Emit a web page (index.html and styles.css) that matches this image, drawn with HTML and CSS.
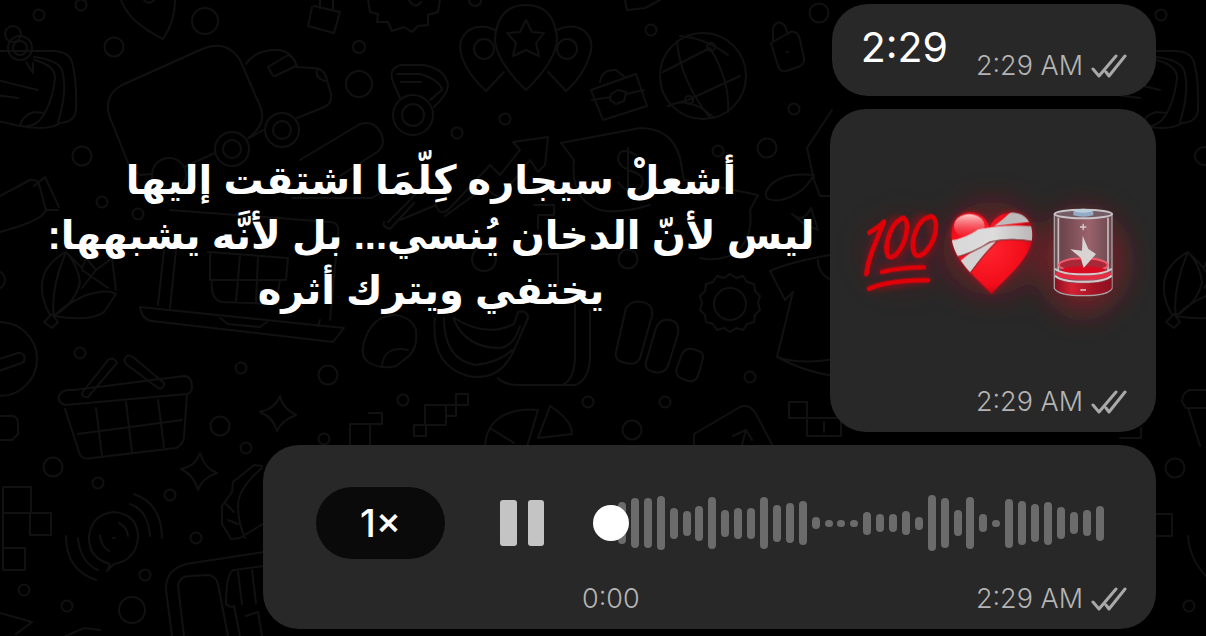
FILE: index.html
```html
<!DOCTYPE html>
<html lang="ar">
<head>
<meta charset="utf-8">
<meta name="viewport" content="width=device-width, initial-scale=1">
<title>Chat</title>
<link rel="stylesheet" href="styles.css">
</head>
<body>
<svg class="wallpaper" viewBox="0 0 1206 636" preserveAspectRatio="xMinYMin slice" aria-hidden="true">
  <defs>
    <g id="note">
      <path d="M-20 51H50Q68 50 72 62Q77 80 76 110Q75 122 60 123Q50 131 20 126L-20 117M34 57Q58 60 62 70Q68 90 58 122M34 60Q55 65 55 78Q52 105 40 120Q32 128 20 126Q22 115 34 112L45 113M-20 76L38 90M-20 93L18 98"/>
    </g>
    <g id="shell">
      <path d="M50 315Q36 290 46 270Q54 258 66 252Q78 265 80 282Q76 302 54 316Q50 290 66 252M54 316Q90 322 104 312L116 294Q106 288 84 296Q66 304 54 316M70 256L82 268L86 258L96 270L112 258M82 270L108 288M96 270L82 288M112 258L116 290M44 322L52 314L58 322L52 328Z"/>
    </g>
  </defs>
  <g class="small-dots">
    <circle cx="39" cy="15" r="5.500"/><circle cx="81" cy="5" r="5.500"/><circle cx="114" cy="47" r="9.500"/><circle cx="205" cy="21" r="13"/><circle cx="359" cy="47" r="6"/><circle cx="359" cy="84" r="13"/><circle cx="82" cy="156" r="9.500"/><circle cx="102" cy="202" r="5.500"/><circle cx="138" cy="214" r="5.500"/><circle cx="-4" cy="280" r="9"/>
    <circle cx="475" cy="0" r="6"/><circle cx="505" cy="119" r="5.500"/><circle cx="457" cy="133" r="5.500"/><circle cx="651" cy="30" r="5.500"/><circle cx="819" cy="13" r="9.500"/><circle cx="794" cy="109" r="5.500"/><circle cx="718" cy="151" r="5.500"/><circle cx="767" cy="148" r="9.500"/><circle cx="484" cy="259" r="12"/><circle cx="628" cy="259" r="9.500"/>
    <circle cx="80" cy="353" r="5.500"/><circle cx="241" cy="368" r="5.500"/><circle cx="328" cy="375" r="9.500"/><circle cx="220" cy="426" r="9.500"/><circle cx="246" cy="448" r="5.500"/><circle cx="324" cy="439" r="5.500"/><circle cx="403" cy="400" r="5.500"/><circle cx="53" cy="467" r="9.500"/><circle cx="98" cy="483" r="5.500"/><circle cx="170" cy="495" r="5.500"/><circle cx="196" cy="538" r="5.500"/><circle cx="145" cy="575" r="5.500"/><circle cx="132" cy="610" r="13"/><circle cx="67" cy="606" r="5.500"/><circle cx="24" cy="590" r="5.500"/>
    <circle cx="588" cy="402" r="5.500"/><circle cx="665" cy="402" r="5.500"/><circle cx="632" cy="430" r="9.500"/><circle cx="750" cy="377" r="5.500"/><circle cx="1161" cy="15" r="5.500"/><circle cx="1204" cy="156" r="9"/><circle cx="1175" cy="468" r="9.500"/><circle cx="1189" cy="606" r="5.500"/>
  </g>
  <use href="#note"/>
  <use href="#note" x="1122"/>
  <use href="#shell"/>
  <use href="#shell" x="1122"/>
  <circle cx="13" cy="34" r="8"/><circle cx="20" cy="48" r="12"/><circle cx="20" cy="48" r="7"/><path d="M26 62l7 11v-10"/>
  <path d="M120 -4Q125 20 163 39Q176 20 175 -4M144 0a6 6 0 0 0 10 0"/>
  <path d="M122 85L200 50Q226 38 240 60L260 106Q267 122 252 135L248 138M122 85Q104 95 109 115L130 168L140 175L152 174M184 167L215 153M246 64Q255 50 276 50Q292 50 297 67L312 68Q324 67 327 80L331 94Q333 104 322 108L297 118M273 76L268 67L288 55Q296 58 296 66L275 76M317 70Q315 78 325 81M263 130L249 138"/>
  <circle cx="282" cy="130" r="17"/><circle cx="282" cy="130" r="9"/><circle cx="232" cy="149" r="17"/><circle cx="232" cy="149" r="9"/><circle cx="169" cy="175" r="17"/>
  <path d="M312 7L308 26L334 33L340 12L314 6M320 8V0M333 10V0"/>
  <path d="M368 0L370 12L378 14L377 22L388 22L392 31L404 27L412 32L418 26L428 25L428 15L438 12L440 0M409 0q6 10 12 2"/>
  <path d="M393 82Q388 68 401 65H424Q447 70 448 86Q447 95 434 107M393 82L400 98M397 74H420Q440 80 442 90L430 100M401 82h20"/><circle cx="413" cy="115" r="20"/><circle cx="413" cy="115" r="11"/>
  <path d="M300 160L360 124Q374 120 381 133Q387 147 374 154L340 176M292 198H372L382 192M388 222L420 190M384 222q-2 5 6 7l24 -26"/>
  <path d="M526 90Q495 60 495 38Q498 5 526 5Q554 5 557 38Q557 60 526 90ZM526 20L532 32L544 33L536 43L539 56L526 50L513 56L516 43L507 33L520 32ZM495 30Q482 23 469 30Q456 40 462 57Q468 75 486 91L504 72M557 30Q572 23 583 30Q596 40 589 57Q584 75 566 91L548 72"/><circle cx="484" cy="49" r="10"/><circle cx="567" cy="49" r="10"/>
  <path d="M591 90L636 74L647 106L603 120ZM600 82Q602 69 616 70L626 78M592 100L611 97M626 94L644 90M611 94L618 90L626 92L624 101L616 104L610 100ZM625 0L627 10L645 8L660 0"/>
  <circle cx="703" cy="76" r="43"/><path d="M677 41Q680 80 710 118M663 72L710 48Q730 80 728 112M680 36Q705 38 728 55M670 105L688 100L740 76M668 106Q690 95 714 118"/><circle cx="711" cy="47" r="4"/><circle cx="689" cy="100" r="4"/>
  <path d="M771 43L790 32Q798 30 800 40L804 58Q805 65 798 67L786 71Q780 72 778 66ZM773 40V28Q778 18 785 26L788 34M787 52h1"/>
  <path d="M561 143L640 128Q672 128 680 158L684 180L758 195L750 210Q754 238 734 254Q716 262 700 258M561 143L574 160Q570 200 600 210Q620 214 650 205M636 155Q618 145 618 160Q620 168 634 172Q648 178 640 188Q628 196 618 182M628 148V196"/>
  <path d="M400 220L436 205Q440 218 450 208L490 165L500 175L520 150L513 142L548 137L545 165L538 172L530 160L500 198L484 188L445 216M534 205h20v10h-16v14"/>
  <path d="M832 110L807 148L814 180L820 196H834M814 175Q775 172 766 192Q764 202 780 200Q802 196 814 175M792 214Q803 224 811 208L818 230L804 224Z"/>
  <path d="M830 255Q790 262 770 271L785 300L793 292L777 357Q800 365 834 359M777 357Q805 372 834 376M818 260q0 15 14 20"/>
  <path d="M-4 198L30 180Q38 178 40 188L46 210Q44 220 0 232M34 186L45 177L59 207M46 210h12"/>
  <path d="M170 210L330 222Q340 222 338 235L330 320M164 250L158 305M176 250L170 308M208 252L288 258L286 280H210V254M212 280Q210 300 222 302L276 304L280 280M240 255L236 302M258 258L256 302M140 307L344 328L333 342L152 321Q142 320 140 307M220 318L228 324L260 327L268 321M320 320L318 326"/>
  <path d="M364 342Q360 356 368 362Q382 370 396 366L410 355Q418 346 416 330Q412 318 396 315Q372 315 364 342M382 366Q384 345 408 350"/>
  <path d="M435 318Q430 365 468 376Q500 382 514 350L528 318Q528 310 518 312L514 324Q486 338 454 318M444 318Q444 360 476 365Q500 362 512 350M454 320Q466 348 500 348Q514 346 520 326M498 378Q504 385 520 385H575Q590 380 590 355V310M562 385Q575 380 575 355V305M524 254h34v30"/>
  <path d="M626 308Q632 300 642 302Q654 304 652 316L640 358Q636 366 626 363Q614 361 616 352ZM656 328Q660 318 670 320Q680 322 678 334L668 366Q664 374 654 372Q644 370 646 362ZM682 354Q686 346 696 350Q704 352 703 358L698 376Q694 384 686 380Q676 378 676 370Z"/>
  <circle cx="730" cy="304" r="16"/>
  <path d="M730 274l6 4 7-2 4 6 7 2 1 7 5 5-2 7 2 7-5 5-1 7-7 2-4 6-7-2-6 4-6-4-7 2-4-6-7-2-1-7-5-5 2-7-2-7 5-5 1-7 7-2 4-6 7 2Z"/>
  <circle cx="0" cy="359" r="37"/><path d="M-4 360L18 353Q26 352 24 362L-4 372M-4 416H12Q18 416 18 424V434L12 440H-4"/>
  <path d="M65 405Q56 402 60 394Q64 389 74 390L184 376Q192 376 192 388Q192 392 187 394ZM65 409L80 455Q84 460 92 458L176 448Q184 444 184 436L187 394M78 434L182 420M96 408L102 456M126 402L132 452M158 400L164 447M82 393L108 360Q114 356 117 363L88 397Q82 398 82 393M124 360Q127 353 133 357L164 383Q164 390 158 388L126 364Z"/>
  <path d="M280 396Q282 408 296 415Q282 420 277 431Q274 418 260 412Q276 408 280 396ZM200 453Q204 468 217 473Q202 478 198 490Q194 475 181 469Q196 466 200 453Z"/>
  <path d="M3 487H31V513H51V535H30V513H3ZM3 513V570H25V548H3M350 424H370V446M350 446V424M369 413H382V424H370M414 425H426V436H414ZM425 405H446V425H425ZM456 394H468V405H446V416H456ZM789 402H807V418H789ZM807 418V436H841V418ZM824 422v10"/>
  <path d="M110 564Q88 558 89 536Q92 514 114 512Q138 514 138 538Q136 560 114 564L107 571ZM100 535q0 10 9 16M119 523q8 4 9 13M66 536Q66 570 96 580M78 538Q80 562 98 570M130 504Q148 510 150 536M134 494Q162 504 162 538M113 538h2"/>
  <path d="M262 466L254 465L233 482L232 492L222 506V524L231 539L240 538L266 522M262 468Q238 488 238 506Q238 522 245 538M226 504l8 8M228 520l10 4"/>
  <path d="M172 636L166 590Q165 570 186 564L264 552M184 636L178 585Q180 576 190 576L208 575Q216 576 218 584L228 636M264 566L234 570Q226 572 226 604Q230 608 234 606L240 636M238 572L242 604M252 570L256 603M246 616L258 612L262 636M0 613L32 622L16 634M66 636L84 628L100 630"/>
  <path d="M485 446Q486 426 502 416Q518 408 538 410L526 450M490 428L514 443M550 406Q572 420 572 434L538 438ZM694 446V434L740 407Q750 403 756 414L774 448M733 436L746 430L752 440M746 430L741 448M1136 514H1172V536H1136M1141 428V438H1120M1206 390H1190Q1182 392 1182 402L1186 408H1206M1188 408L1200 446M1188 536Q1190 560 1206 576"/>
</svg>

<main class="chat">
  <article class="bubble bubble-text">
    <p class="message" dir="ltr">2:29</p>
    <div class="meta" dir="ltr">
      <time>2:29 AM</time>
      <svg class="ticks" viewBox="0 0 36 24" role="img" aria-label="Delivered"><path d="M2 15L8 22L25 2M15 18L18 22L34 2"/></svg>
    </div>
  </article>

  <div class="sticker-row">
    <p class="caption" dir="rtl">أشعلْ سيجاره كِلّمَا اشتقت إليها<br>ليس لأنّ الدخان يُنسي... بل لأنَّه يشبهها:<br>يختفي ويترك أثره</p>
    <article class="bubble bubble-sticker">
      <svg class="sticker" viewBox="-30 0 978 390" role="img" aria-label="Hundred points, mending heart, low battery">
        <defs>
          <filter id="soft" filterUnits="userSpaceOnUse" x="-30" y="-200" width="978" height="800"><feGaussianBlur stdDeviation="42"/></filter>
          <filter id="halo" x="-30%" y="-30%" width="160%" height="160%"><feGaussianBlur stdDeviation="10"/></filter>
          <radialGradient id="heartFill" cx="45%" cy="45%" r="60%"><stop offset="0" stop-color="#ff2530"/><stop offset=".7" stop-color="#f20d1a"/><stop offset="1" stop-color="#b8000c"/></radialGradient>
          <linearGradient id="shine" x1="0" y1="0" x2="0" y2="1"><stop offset="0" stop-color="#ffd0d0"/><stop offset="1" stop-color="#f03040" stop-opacity=".3"/></linearGradient>
          <linearGradient id="bandage" x1="0" y1="0" x2="1" y2="0"><stop offset="0" stop-color="#d8d8d8"/><stop offset=".5" stop-color="#dedcdc"/><stop offset="1" stop-color="#b5b3b3"/></linearGradient>
          <linearGradient id="glass" x1="0" y1="0" x2="1" y2="0"><stop offset="0" stop-color="#6c5057"/><stop offset=".15" stop-color="#70464e"/><stop offset=".6" stop-color="#9b626c"/><stop offset="1" stop-color="#67494f"/></linearGradient>
          <linearGradient id="base" x1="0" y1="0" x2="1" y2="0"><stop offset="0" stop-color="#8b1020"/><stop offset=".3" stop-color="#d52233"/><stop offset=".65" stop-color="#a61525"/><stop offset="1" stop-color="#8b1020"/></linearGradient>
          <clipPath id="heartClip"><path d="M455 312C420 270 337 215 334 135C334 90 358 67 390 67C420 67 441 87 449 112C462 82 488 67 520 68C557 70 578 98 577 137C574 210 490 268 455 312Z"/></clipPath>
        </defs>
        <g class="glow" filter="url(#soft)"><ellipse cx="455" cy="175" rx="145" ry="140" opacity=".45"/><ellipse cx="730" cy="215" rx="125" ry="155" opacity=".6"/><ellipse cx="185" cy="190" rx="120" ry="110" opacity=".16"/></g>
        <g class="hundred-glow" filter="url(#halo)"><path d="M78 250L112 120M120 240L255 228M88 295L265 268"/><ellipse cx="168" cy="145" rx="25" ry="58"/><ellipse cx="248" cy="138" rx="30" ry="58"/></g>
        <g class="hundred">
          <path d="M88 128Q115 112 132 95Q112 145 96 184Q83 220 79 252"/>
          <path d="M192 84C152 92 130 172 144 198C160 216 199 164 201 112C202 91 193 78 182 87"/>
          <path d="M272 79C231 86 210 154 222 188C237 220 286 164 288 111C289 86 277 72 264 83"/>
          <path d="M126 246Q180 232 251 232M87 296Q155 269 264 271"/>
        </g>
        <path class="heart-glow" filter="url(#halo)" d="M455 312C420 270 337 215 334 135C334 90 358 67 390 67C420 67 441 87 449 112C462 82 488 67 520 68C557 70 578 98 577 137C574 210 490 268 455 312Z"/>
        <g clip-path="url(#heartClip)">
          <path fill="url(#heartFill)" d="M325 55H590V320H325Z"/>
          <ellipse cx="388" cy="108" rx="46" ry="36" fill="url(#shine)"/>
          <path fill="#bcbaba" d="M462 108C492 88 508 66 525 60L562 78L585 94Q520 100 462 108Z"/>
          <path fill="#b80c18" d="M545 103L585 96V116Z"/>
          <path fill="#d3d1d1" d="M362 212Q388 190 412 176L474 148Q430 190 389 250Z"/>
          <path fill="url(#bandage)" d="M328 152Q375 146 415 118Q500 100 590 110V155Q520 140 450 155Q400 188 340 203Z"/>
          <path fill="none" stroke="#6b3034" stroke-width="3" d="M342 204Q400 189 450 156Q510 141 580 156M474 152Q430 194 389 250"/>
        </g>
        <path fill="url(#glass)" stroke="#aaa1a4" stroke-width="4" d="M643 72V295Q655 317 730 317Q805 317 816 295V72Z"/>
        <path fill="none" stroke="#c9babd" stroke-width="5" d="M655 83V240M804 83V240"/>
        <ellipse cx="730" cy="225" rx="73" ry="20" fill="#a82838" stroke="#f05a6d" stroke-width="6"/>
        <ellipse cx="730" cy="241" rx="66" ry="12" fill="#d90b22"/>
        <path fill="url(#base)" d="M645 260Q660 280 730 280Q800 280 815 260V295Q800 315 730 315Q660 315 645 295Z"/>
        <path fill="none" stroke="#e92b42" stroke-width="12" d="M649 248Q665 263 730 263Q795 263 811 248"/>
        <path fill="none" stroke="#d6c6ca" stroke-width="6" d="M645 236Q665 253 730 253Q795 253 815 236M645 257Q665 275 730 275Q795 275 815 257"/>
        <ellipse cx="730" cy="72" rx="86" ry="13" fill="#745c65" stroke="#c8c3c7" stroke-width="6"/>
        <path fill="#92aac3" d="M700 64Q730 52 760 64V76Q730 84 700 76Z"/><ellipse cx="730" cy="62" rx="28" ry="6" fill="#becbd8"/>
        <path fill="none" stroke="#d8cdd0" stroke-width="4" d="M720 111H739M729.500 101V121M721 300H738"/>
        <path fill="#dad3d3" d="M728 137L745 177L768 192L731 234L722 203L691 178L726 182Z"/>
      </svg>
      <div class="meta" dir="ltr">
        <time>2:29 AM</time>
        <svg class="ticks" viewBox="0 0 36 24" role="img" aria-label="Delivered"><path d="M2 15L8 22L25 2M15 18L18 22L34 2"/></svg>
      </div>
    </article>
  </div>

  <article class="bubble bubble-voice" dir="ltr">
    <div class="player">
      <button class="speed" type="button" aria-label="Playback speed 1x">1×</button>
      <button class="pause" type="button" aria-label="Pause"><svg viewBox="0 0 44 46"><rect x="0" y="0" width="17" height="46" rx="3"/><rect x="28" y="0" width="16" height="46" rx="3"/></svg></button>
      <div class="track">
        <div class="wave" id="wave" aria-hidden="true"></div>
        <input class="seek" type="range" min="0" max="100" value="0" aria-label="Seek">
      </div>
    </div>
    <div class="voice-footer">
      <time>0:00</time>
      <div class="meta">
        <time>2:29 AM</time>
        <svg class="ticks" viewBox="0 0 36 24" role="img" aria-label="Delivered"><path d="M2 15L8 22L25 2M15 18L18 22L34 2"/></svg>
      </div>
    </div>
  </article>
</main>
<script src="wave.js"></script>
</body>
</html>
```
FILE: wave.js
```js
const levels = [42, 50, 50, 54, 31, 25, 35, 52, 27, 31, 31, 52, 37, 40, 44, 12, 7, 7, 7,
  23, 18, 18, 24, 13, 56, 50, 26, 52, 18, 7, 49, 44, 38, 43, 32, 22, 26, 35];
const wave = document.getElementById('wave');
for (const level of levels) {
  const bar = document.createElement('span');
  bar.className = 'bar';
  bar.style.height = level + 'px';
  wave.append(bar);
}
```
FILE: styles.css
```css
* { box-sizing: border-box; }

body {
  margin: 0;
  min-height: 100vh;
  position: relative;
  overflow-x: hidden;
  background: #000;
  color: #fff;
  font-family: Inter, "DejaVu Sans", sans-serif;
}

p { margin: 0; }

.wallpaper {
  position: absolute;
  inset: 0;
  width: 100%;
  height: 100%;
  fill: none;
  stroke: #111;
  stroke-width: 2;
  stroke-linejoin: round;
  stroke-linecap: round;
}

.chat {
  position: relative;
  display: flex;
  flex-direction: column;
  gap: 13px;
  padding: 4px 50px 6px 32px;
}

.bubble { background: #282828; border-radius: 36px; }

.meta {
  display: flex;
  align-items: center;
  justify-content: flex-end;
  gap: 8px;
}

.meta, .voice-footer {
  color: #b4b4b4;
  font-size: 27px;
  font-weight: 300;
  line-height: 28px;
}

.ticks {
  width: 36px;
  height: 24px;
  fill: none;
  stroke: #a9a9a9;
  stroke-width: 3;
  stroke-linecap: round;
  stroke-linejoin: round;
}

.bubble-text {
  align-self: flex-end;
  display: flex;
  align-items: flex-end;
  gap: 28px;
  padding: 14px 29px 16px;
}

.message {
  font-size: 41px;
  line-height: 58px;
  padding-bottom: 4px;
}

.sticker-row { display: flex; align-items: stretch; }

.caption {
  flex: 1;
  padding-top: 44px;
  text-align: center;
  white-space: nowrap;
  font: 700 40px/55px "Liberation Sans", "DejaVu Sans", sans-serif;
}

.bubble-sticker {
  width: 326px;
  min-height: 323px;
  display: flex;
  flex-direction: column;
  justify-content: space-between;
  padding: 81px 0 16px;
}

.bubble-sticker .meta { padding-right: 29px; }

.sticker { width: 100%; height: 130px; overflow: visible; }
.glow { fill: #a01a28; }
.hundred, .hundred-glow { fill: none; stroke: #df0008; stroke-width: 14; stroke-linecap: round; stroke-linejoin: round; }
.hundred-glow { stroke-width: 18; opacity: .4; }
.heart-glow { fill: #e01020; opacity: .7; }

.bubble-voice { margin-left: 231px; padding: 42px 0 16px; }

.player {
  display: flex;
  align-items: center;
  padding: 0 52px 0 53px;
}

button { border: 0; padding: 0; cursor: pointer; }

.speed {
  width: 129px;
  height: 72px;
  margin-right: 55px;
  border-radius: 36px;
  background: #0a0a0a;
  color: #fff;
  font: 500 38px/72px Inter, sans-serif;
}

.pause { width: 44px; height: 46px; margin-right: 49px; background: none; }
.pause svg { display: block; width: 44px; height: 46px; fill: #c4c4c4; }

.track { flex: 1; display: grid; align-items: center; }
.wave, .seek { grid-area: 1 / 1; }

.wave {
  display: flex;
  align-items: center;
  justify-content: space-between;
  height: 56px;
  padding-left: 25px;
}

.bar { width: 8px; border-radius: 4px; background: #6b6b6b; }

.seek {
  appearance: none;
  width: 100%;
  height: 36px;
  margin: 0;
  background: transparent;
}

.seek::-webkit-slider-thumb {
  appearance: none;
  width: 36px;
  height: 36px;
  border-radius: 50%;
  background: #fff;
}

.voice-footer {
  display: flex;
  justify-content: space-between;
  padding: 26px 29px 0 319px;
}
```
